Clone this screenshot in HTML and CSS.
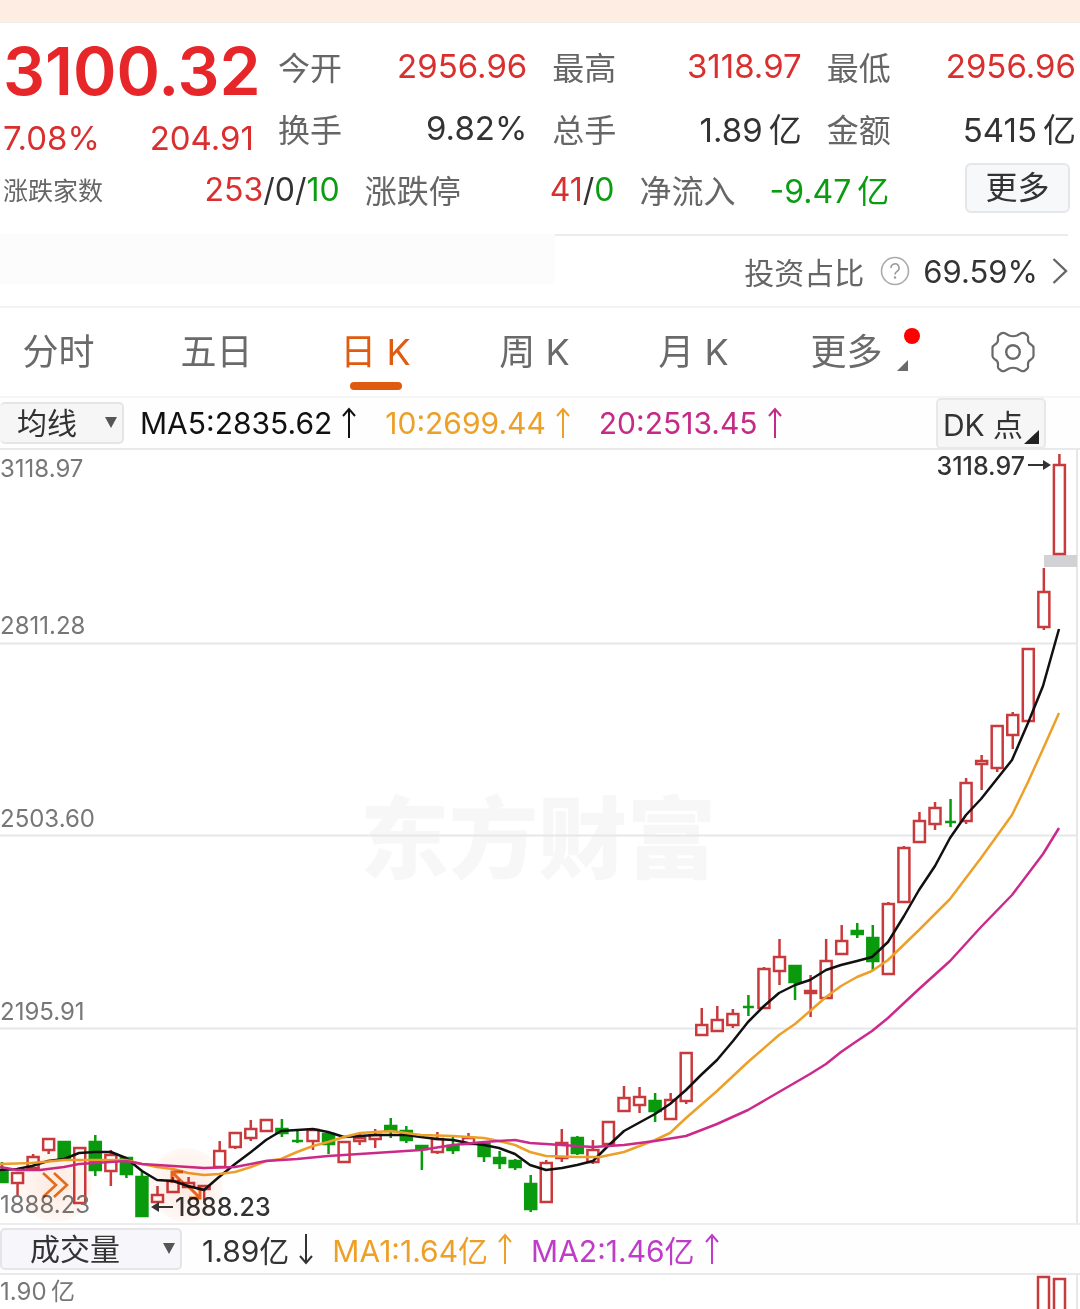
FILE: index.html
```html
<!DOCTYPE html>
<html lang="zh-CN">
<head>
    <meta charset="UTF-8">
    <meta name="viewport" content="width=device-width, initial-scale=1.0">
    <title>日K</title>
    <link rel="stylesheet" href="styles.css">
</head>
<body>
    <!-- arrow shared by the MA legends -->
    <svg class="defs" width="0" height="0" aria-hidden="true">
        <symbol id="arrow" viewBox="0 0 14 32">
            <path d="M7 31V2M1 9L7 2L13 9" fill="none" stroke="currentColor" stroke-width="2"/>
        </symbol>
    </svg>

    <div class="banner"></div>

    <header class="quote">
        <div class="quote-top">
            <div class="price">
                <strong class="last up">3100.32</strong>
                <div class="change up"><span>7.08%</span><span>204.91</span></div>
            </div>
            <dl class="stats">
                <div class="stat"><dt>今开</dt><dd class="up">2956.96</dd></div>
                <div class="stat"><dt>最高</dt><dd class="up">3118.97</dd></div>
                <div class="stat"><dt>最低</dt><dd class="up">2956.96</dd></div>
                <div class="stat"><dt>换手</dt><dd>9.82%</dd></div>
                <div class="stat"><dt>总手</dt><dd>1.89&thinsp;亿</dd></div>
                <div class="stat"><dt>金额</dt><dd>5415&thinsp;亿</dd></div>
            </dl>
        </div>
        <div class="quote-bottom">
            <div class="stat"><span class="label small">涨跌家数</span><span><b class="up">253</b>/0/<b class="down">10</b></span></div>
            <div class="stat"><span class="label">涨跌停</span><span><b class="up">41</b>/<b class="down">0</b></span></div>
            <div class="stat"><span class="label">净流入</span><span class="down">-9.47&thinsp;亿</span></div>
            <button class="more-btn" type="button">更多</button>
        </div>
    </header>

    <section class="ratio">
        <div class="ratio-blank"></div>
        <a href="#ratio" class="ratio-link">
            <span class="label">投资占比</span>
            <svg class="help" viewBox="0 0 30 30" aria-hidden="true">
                <circle cx="15" cy="15" r="13.5" fill="none" stroke="#aaa" stroke-width="1.6"/>
                <path d="M11 12a4 4 0 1 1 6 3.3c-1.400 .9-2 1.600-2 3.200" fill="none" stroke="#999" stroke-width="1.6"/>
                <circle cx="15" cy="21.500" r="1.200" fill="#999"/>
            </svg>
            <span>69.59%</span>
            <svg class="chevron" viewBox="0 0 16 28" aria-hidden="true">
                <path d="M1.500 2L14 14L1.500 26" fill="none" stroke="#666" stroke-width="2.400"/>
            </svg>
        </a>
    </section>

    <nav class="tabs">
        <a href="#minute">分时</a>
        <a href="#five">五日</a>
        <a href="#day" class="active">日 K</a>
        <a href="#week">周 K</a>
        <a href="#month">月 K</a>
        <a href="#more" class="has-more">更多</a>
        <button class="gear" type="button" aria-label="设置">
            <svg viewBox="-22 -21 44 42" aria-hidden="true">
                <path d="M-4 -16.500Q0 -15 4 -16.500L8 -18.800Q10 -19.800 12 -18.500L14 -17Q15.500 -15.500 15 -13.500Q14.500 -9 18 -7.500Q20.500 -6 20.500 -4V4Q20.500 6 18 7.500Q14.500 9 15 13.500Q15.500 15.500 14 17L12 18.500Q10 19.800 8 18.800L4 16.500Q0 15 -4 16.500L-8 18.800Q-10 19.800 -12 18.500L-14 17Q-15.500 15.500 -15 13.500Q-14.500 9 -18 7.500Q-20.500 6 -20.500 4V-4Q-20.500 -6 -18 -7.500Q-14.500 -9 -15 -13.500Q-15.500 -15.500 -14 -17L-12 -18.500Q-10 -19.800 -8 -18.800Z" fill="none" stroke="#6a6a6a" stroke-width="2.200"/>
                <circle r="6.800" fill="none" stroke="#6a6a6a" stroke-width="2.400"/>
            </svg>
        </button>
    </nav>

    <div class="legend">
        <label class="picker picker-ma">
            <select aria-label="指标"><option>均线</option></select>
        </label>
        <span class="ma5">MA5:2835.62<svg class="arrow"><use href="#arrow"/></svg></span>
        <span class="ma10">10:2699.44<svg class="arrow"><use href="#arrow"/></svg></span>
        <span class="ma20">20:2513.45<svg class="arrow"><use href="#arrow"/></svg></span>
        <button class="dk-btn" type="button">DK 点</button>
    </div>

    <main class="chart">
        <svg id="kline" viewBox="0 450 1080 773" role="img" aria-label="日K">
            <text class="watermark" x="360" y="871">东方财富</text>
            <path class="grid" d="M0 643.500H1077M0 835.500H1077M0 1028.500H1077"/>
            <path class="frame" d="M1077 450V1223"/>
            <rect x="1044" y="555" width="33" height="12" fill="#d2d2d4"/>
            <g id="candles"></g>
            <g id="lines"></g>
            <g class="axis">
                <text x="0" y="477">3118.97</text>
                <text x="0" y="634">2811.28</text>
                <text x="0" y="827">2503.60</text>
                <text x="0" y="1020">2195.91</text>
                <text x="0" y="1213">1888.23</text>
            </g>
            <g class="mark">
                <text x="1025" y="475" text-anchor="end">3118.97</text>
                <path d="M1028 465H1046"/>
                <path class="head" d="M1043 460L1051 465L1043 470Z"/>
                <text x="175" y="1216">1888.23</text>
                <path d="M173 1207H157"/>
                <path class="head" d="M159 1202L151 1207L159 1212Z"/>
            </g>
        </svg>
        <button class="float-btn float-next" type="button" aria-label="前进">
            <svg viewBox="0 0 60 60"><path d="M18 18L31 30L18 42M29 18L42 30L29 42" fill="none" stroke="#e06c1c" stroke-width="2.600"/></svg>
        </button>
        <button class="float-btn float-expand" type="button" aria-label="全屏">
            <svg viewBox="0 0 60 60"><path d="M27 17H16V28M16 17L28 29M33 43H44V32M44 43L31 30" fill="none" stroke="#e8641c" stroke-width="3"/></svg>
        </button>
    </main>

    <div class="legend legend-vol">
        <label class="picker picker-vol">
            <select aria-label="副图指标"><option>成交量</option></select>
        </label>
        <span class="vol">1.89亿<svg class="arrow arrow-down"><use href="#arrow"/></svg></span>
        <span class="vol1">MA1:1.64亿<svg class="arrow"><use href="#arrow"/></svg></span>
        <span class="vol2">MA2:1.46亿<svg class="arrow"><use href="#arrow"/></svg></span>
    </div>

    <section class="volume">
        <svg viewBox="0 0 1080 34" role="img" aria-label="成交量">
            <path class="frame" d="M1077 0V34"/>
            <path class="bars" d="M1038 40V2H1049V40M1054 40V4H1065V40"/>
            <text class="axis" x="0" y="25">1.90&thinsp;亿</text>
        </svg>
    </section>

    <script src="chart.js"></script>
</body>
</html>
```
FILE: styles.css
```css
* {
    box-sizing: border-box;
}
body {
    margin: 0;
    background: #fff;
    color: #333;
    font-family: Inter, "Noto Sans CJK SC", sans-serif;
    font-size: 32px;
    overflow-x: hidden;
}
button, select {
    font-family: inherit;
    color: inherit;
    cursor: pointer;
}
a {
    color: inherit;
    text-decoration: none;
}
b {
    font-weight: 400;
}
.defs {
    position: absolute;
}
.up {
    color: #d9302f;
}
.down {
    color: #0c9c12;
}

/* quote */
.banner {
    height: 23px;
    background: #feede3;
    border-bottom: 1px solid #f5ece8;
}
.quote {
    padding: 12px 4px 0 3px;
}
.quote-top {
    display: grid;
    grid-template-columns: minmax(0, 251fr) 798fr;
    gap: 24px;
}
.last {
    display: block;
    font-size: 66px;
    font-weight: 600;
    line-height: 72px;
    color: #e7262a;
}
.change {
    display: flex;
    justify-content: space-between;
    font-size: 33px;
    line-height: 62px;
}
.stats {
    display: grid;
    grid-template-columns: repeat(3, 1fr);
    grid-auto-rows: 62px;
    column-gap: 25px;
    margin: 0;
}
.stat {
    display: flex;
    justify-content: space-between;
    align-items: center;
    white-space: nowrap;
}
.stat dt, .label {
    color: #666;
}
.stat dd {
    margin: 0;
    font-size: 33px;
}
.quote-bottom {
    display: grid;
    grid-template-columns: 337fr 250fr 250fr 156fr;
    column-gap: 25px;
    margin-top: -6px;
    padding-right: 6px;
    height: 52px;
}
.label.small {
    font-size: 25px;
}
.more-btn {
    justify-self: end;
    width: 105px;
    height: 50px;
    padding: 0;
    font-size: 32px;
    line-height: 46px;
    background: #f7f8fa;
    border: 2px solid #e5e6e9;
    border-radius: 6px;
}

/* ratio */
.ratio {
    display: flex;
    height: 74px;
    margin-top: 19px;
    border-bottom: 2px solid #f3f3f3;
}
.ratio-blank {
    width: 555px;
    height: 50px;
    background: #fcfcfc;
}
.ratio-link {
    flex: 1;
    display: flex;
    justify-content: flex-end;
    align-items: center;
    margin-right: 12px;
    border-top: 2px solid #ececec;
    font-size: 31px;
}
.ratio-link .label {
    font-size: 30px;
}
.help {
    width: 30px;
    height: 30px;
    margin: 0 13px 0 16px;
}
.chevron {
    width: 16px;
    height: 28px;
    margin-left: 14px;
}

/* tabs */
.tabs {
    display: grid;
    grid-template-columns: 137fr repeat(5, 159fr) 148fr;
    height: 90px;
    border-bottom: 2px solid #f5f5f5;
    font-size: 36px;
    line-height: 88px;
    color: #6a6a6a;
    text-align: center;
}
.tabs a {
    position: relative;
}
.tabs a:first-child {
    padding-right: 20px;
}
.tabs .active {
    color: #df5b10;
}
.tabs .active::after {
    content: "";
    position: absolute;
    left: 50%;
    bottom: 6px;
    width: 52px;
    height: 8px;
    margin-left: -26px;
    border-radius: 4px;
    background: #df5b10;
}
.tabs .has-more {
    padding-right: 12px;
}
.has-more::before {
    content: "";
    position: absolute;
    top: 20px;
    right: 12px;
    width: 16px;
    height: 16px;
    border-radius: 50%;
    background: #f00;
}
.has-more::after {
    content: "";
    position: absolute;
    right: 24px;
    bottom: 25px;
    border-left: 11px solid transparent;
    border-bottom: 11px solid #6a6a6a;
}
.gear {
    padding: 0 0 0 14px;
    background: none;
    border: none;
}
.gear svg {
    display: block;
    width: 44px;
    height: 42px;
    margin: 0 auto;
}

/* legends */
.legend {
    display: flex;
    align-items: center;
    height: 52px;
    border-bottom: 2px solid #e9e9ec;
    background: #fefefe;
    font-size: 30px;
    white-space: nowrap;
}
.legend-vol {
    height: 50px;
}
.legend span {
    display: flex;
    align-items: center;
    margin-right: 29px;
}
.arrow {
    width: 14px;
    height: 32px;
    margin-left: 10px;
}
.arrow-down {
    transform: rotate(180deg);
}
.picker {
    position: relative;
    margin-right: 16px;
}
.picker::after {
    content: "";
    position: absolute;
    top: 15px;
    right: 7px;
    border: 6px solid transparent;
    border-top: 11px solid #555;
    border-bottom: none;
    pointer-events: none;
}
.picker select {
    appearance: none;
    width: 100%;
    height: 42px;
    padding: 0 0 0 17px;
    font-size: 30px;
    line-height: 38px;
    background: #f6f6f7;
    border: 2px solid #e5e5e7;
    border-radius: 5px;
}
.picker-ma {
    width: 124px;
}
.picker-ma select {
    border-left: none;
}
.picker-vol {
    width: 182px;
    margin-right: 20px;
}
.picker-vol select {
    padding-left: 28px;
    background: #f7f7fb;
}
.ma5 {
    color: #111;
}
.ma10, .vol1 {
    color: #eda028;
}
.ma20 {
    color: #c42a86;
}
.vol2 {
    color: #bf3cc8;
}
.legend .vol, .legend .vol1 {
    margin-right: 19px;
}
.dk-btn {
    position: relative;
    width: 110px;
    height: 51px;
    margin: 0 34px 0 auto;
    padding: 0 16px 0 0;
    font-size: 30px;
    background: #f6f6f7;
    border: 2px solid #e8e8ea;
    border-radius: 5px;
}
.dk-btn::after {
    content: "";
    position: absolute;
    right: 5px;
    bottom: 3px;
    border-left: 15px solid transparent;
    border-bottom: 14px solid #222;
}

/* charts */
.chart {
    position: relative;
    border-bottom: 2px solid #ededee;
}
.chart > svg, .volume svg {
    display: block;
    width: 100%;
}
.grid, .frame {
    fill: none;
    stroke: #e6e7ea;
    stroke-width: 2;
}
.axis {
    font-size: 24px;
    fill: #777;
}
.mark {
    font-size: 25px;
    font-weight: 500;
    fill: #333;
    stroke: none;
}
.mark path {
    stroke: #333;
    stroke-width: 2;
}
.mark .head {
    stroke: none;
}
.watermark {
    font-size: 89px;
    font-weight: 900;
    fill: #f7f7f7;
}
.rise, .bars {
    fill: none;
    stroke: #c93a3d;
    stroke-width: 2.5;
}
.fall {
    fill: #0a9a0d;
    stroke: #0a9a0d;
    stroke-width: 2.5;
}
.line {
    fill: none;
    stroke-width: 2.5;
    stroke-linejoin: round;
}
.line-ma5 {
    stroke: #111;
}
.line-ma10 {
    stroke: #eda028;
}
.line-ma20 {
    stroke: #cb2a8a;
}
.float-btn {
    position: absolute;
    width: 74px;
    height: 74px;
    padding: 7px;
    border: none;
    border-radius: 50%;
    background: radial-gradient(#fde9df, #fff8f5 70%);
    mix-blend-mode: multiply;
}
.float-btn svg {
    display: block;
    width: 60px;
    height: 60px;
}
.float-next {
    left: 18px;
    bottom: 1px;
}
.float-expand {
    left: 149px;
    bottom: 1px;
}
```
FILE: chart.js
```javascript
// x position of candle number i
const candleX = i => 2 + i * 15.55;

// high, body top, body bottom, low, 1 = rise / 0 = fall
const candles = [
    [1162, 1172, 1182, 1183, 0], [1173, 1173, 1183, 1196, 1], [1154, 1157, 1168, 1168, 1],
    [1139, 1139, 1150, 1154, 1], [1142, 1142, 1158, 1158, 0], [1148, 1148, 1203, 1204, 1],
    [1135, 1142, 1170, 1176, 0], [1150, 1155, 1171, 1186, 1], [1157, 1158, 1174, 1178, 0],
    [1172, 1177, 1216, 1217, 0], [1186, 1195, 1202, 1202, 1], [1177, 1181, 1192, 1193, 1],
    [1177, 1183, 1187, 1188, 1], [1185, 1186, 1189, 1200, 1], [1141, 1151, 1167, 1167, 1],
    [1132, 1133, 1147, 1149, 1], [1120, 1129, 1138, 1141, 1], [1119, 1120, 1131, 1132, 1],
    [1119, 1129, 1133, 1137, 0], [1130, 1141, 1141, 1143, 0], [1130, 1130, 1141, 1150, 1],
    [1133, 1134, 1144, 1154, 0], [1142, 1142, 1162, 1162, 1], [1133, 1138, 1141, 1145, 1],
    [1129, 1135, 1139, 1148, 1], [1118, 1126, 1131, 1138, 0], [1126, 1131, 1140, 1143, 0],
    [1146, 1146, 1149, 1170, 0], [1132, 1139, 1152, 1154, 1], [1137, 1146, 1150, 1154, 0],
    [1133, 1138, 1144, 1144, 1], [1142, 1144, 1156, 1162, 0], [1151, 1158, 1163, 1169, 0],
    [1159, 1161, 1167, 1170, 0], [1175, 1184, 1209, 1212, 0], [1160, 1163, 1202, 1202, 1],
    [1129, 1143, 1158, 1162, 1], [1136, 1138, 1153, 1155, 0], [1140, 1150, 1162, 1164, 1],
    [1122, 1122, 1144, 1144, 1], [1086, 1098, 1111, 1111, 1], [1087, 1097, 1105, 1113, 1],
    [1093, 1101, 1111, 1122, 0], [1093, 1100, 1119, 1119, 1], [1053, 1053, 1101, 1104, 1],
    [1008, 1025, 1035, 1035, 1], [1006, 1020, 1031, 1031, 1], [1009, 1014, 1025, 1028, 1],
    [995, 1007, 1007, 1016, 0], [967, 969, 1008, 1008, 1], [939, 957, 971, 985, 1],
    [965, 966, 982, 1000, 0], [975, 991, 993, 1017, 1], [939, 961, 998, 998, 1],
    [925, 941, 954, 954, 1], [923, 931, 934, 938, 0], [925, 938, 961, 970, 0],
    [902, 904, 974, 974, 1], [846, 848, 902, 902, 1], [812, 821, 842, 843, 1],
    [802, 808, 824, 830, 1], [799, 822, 822, 827, 0], [778, 783, 821, 824, 1],
    [755, 761, 764, 790, 1], [726, 726, 768, 772, 1], [712, 715, 735, 749, 1],
    [648, 649, 721, 721, 1], [568, 592, 627, 630, 1], [454, 465, 554, 554, 1]
];

const lines = {
    ma5: '0,1170 17,1169 32,1166 48,1161 64,1159 79,1153 95,1152 111,1152 126,1158 142,1171 157,1180 173,1181 188,1186 204,1190 219,1177 235,1164 251,1152 266,1140 281,1131 297,1130 313,1129 328,1132 344,1137 360,1136 375,1135 391,1135 406,1135 421,1137 437,1139 453,1140 468,1143 484,1145 499,1148 515,1154 530,1165 546,1170 562,1168 577,1165 593,1161 608,1146 624,1131 655,1114 670,1104 686,1090 701,1075 717,1060 733,1041 748,1022 764,1006 779,993 795,985 810,980 826,970 841,965 857,961 872,957 888,942 904,916 919,890 935,866 950,838 966,815 981,799 1012,760 1028,723 1043,686 1059,629',
    ma10: '0,1164 32,1163 64,1160 111,1160 126,1160 142,1164 157,1167 173,1169 188,1173 204,1175 219,1174 235,1172 251,1167 266,1161 281,1159 297,1152 313,1146 328,1142 344,1137 360,1133 375,1132 391,1131 406,1133 421,1135 453,1136 484,1138 499,1141 515,1145 530,1152 546,1156 577,1157 600,1157 624,1152 655,1140 670,1133 686,1118 717,1091 748,1062 779,1035 795,1024 810,1011 826,997 841,986 857,977 872,971 888,960 919,930 950,899 981,858 1012,815 1028,782 1043,749 1059,713',
    ma20: '0,1167 17,1170 40,1170 64,1167 79,1164 126,1161 142,1164 173,1166 204,1168 235,1167 266,1161 297,1159 328,1156 375,1153 421,1150 453,1145 484,1142 515,1140 530,1143 593,1147 624,1145 655,1141 686,1136 717,1124 748,1110 779,1092 810,1074 826,1064 841,1052 857,1041 872,1031 888,1018 919,989 950,961 981,927 1012,895 1043,854 1059,828'
};

function addShape(parent, tag, attrs) {
    const el = document.createElementNS('http://www.w3.org/2000/svg', tag);
    for (const key in attrs) {
        el.setAttribute(key, attrs[key]);
    }
    parent.appendChild(el);
}

const candleGroup = document.getElementById('candles');
candles.forEach(([high, top, bottom, low, rise], i) => {
    const x = candleX(i);
    addShape(candleGroup, 'path', {
        class: rise ? 'rise' : 'fall',
        d: `M${x} ${high}V${top}M${x} ${bottom}V${low}M${x - 5.5} ${top}H${x + 5.5}V${bottom}H${x - 5.5}Z`
    });
});

const lineGroup = document.getElementById('lines');
for (const name in lines) {
    addShape(lineGroup, 'polyline', { class: 'line line-' + name, points: lines[name] });
}
```
